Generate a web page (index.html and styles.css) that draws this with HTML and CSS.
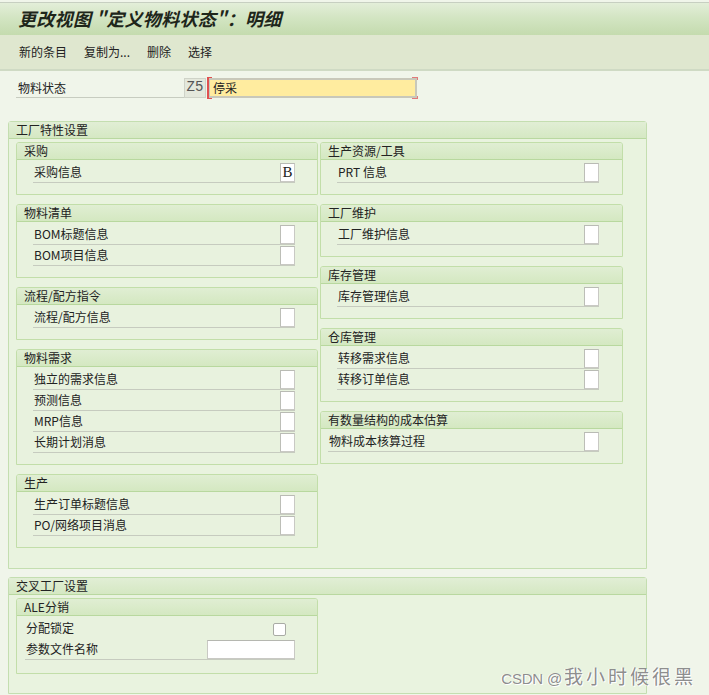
FILE: index.html
```html
<!DOCTYPE html>
<html lang="zh-CN">
<head>
<meta charset="utf-8">
<title>更改视图 "定义物料状态"：明细</title>
<link rel="stylesheet" href="styles.css">
</head>
<body>
<div class="titlebar"><h1>更改视图 "定义物料状态"：明细</h1></div>
<div class="toolbar">
  <span>新的条目</span><span>复制为...</span><span>删除</span><span>选择</span>
</div>
<main class="content">
  <div class="keyrow">
    <span class="keylabel">物料状态</span>
    <span class="code">Z5</span>
    <span class="yellow">停采<i class="mk mk-l"></i><i class="mk mk-rt"></i><i class="mk mk-rb"></i></span>
  </div>

  <section class="group g1">
    <div class="ghead">工厂特性设置</div>
    <div class="gbody cols">
      <div class="col">
        <div class="box">
          <div class="bhead">采购</div>
          <div class="bbody">
            <div class="row"><span class="lbl">采购信息</span><span class="chk val">B</span></div>
          </div>
        </div>
        <div class="box">
          <div class="bhead">物料清单</div>
          <div class="bbody">
            <div class="row"><span class="lbl">BOM标题信息</span><span class="chk"></span></div>
            <div class="row"><span class="lbl">BOM项目信息</span><span class="chk"></span></div>
          </div>
        </div>
        <div class="box">
          <div class="bhead">流程/配方指令</div>
          <div class="bbody">
            <div class="row"><span class="lbl">流程/配方信息</span><span class="chk"></span></div>
          </div>
        </div>
        <div class="box">
          <div class="bhead">物料需求</div>
          <div class="bbody">
            <div class="row"><span class="lbl">独立的需求信息</span><span class="chk"></span></div>
            <div class="row"><span class="lbl">预测信息</span><span class="chk"></span></div>
            <div class="row"><span class="lbl">MRP信息</span><span class="chk"></span></div>
            <div class="row"><span class="lbl">长期计划消息</span><span class="chk"></span></div>
          </div>
        </div>
        <div class="box">
          <div class="bhead">生产</div>
          <div class="bbody">
            <div class="row"><span class="lbl">生产订单标题信息</span><span class="chk"></span></div>
            <div class="row"><span class="lbl">PO/网络项目消息</span><span class="chk"></span></div>
          </div>
        </div>
      </div>
      <div class="col right">
        <div class="box">
          <div class="bhead">生产资源/工具</div>
          <div class="bbody">
            <div class="row"><span class="lbl">PRT 信息</span><span class="chk"></span></div>
          </div>
        </div>
        <div class="box">
          <div class="bhead">工厂维护</div>
          <div class="bbody">
            <div class="row"><span class="lbl">工厂维护信息</span><span class="chk"></span></div>
          </div>
        </div>
        <div class="box">
          <div class="bhead">库存管理</div>
          <div class="bbody">
            <div class="row"><span class="lbl">库存管理信息</span><span class="chk"></span></div>
          </div>
        </div>
        <div class="box">
          <div class="bhead">仓库管理</div>
          <div class="bbody">
            <div class="row"><span class="lbl">转移需求信息</span><span class="chk"></span></div>
            <div class="row"><span class="lbl">转移订单信息</span><span class="chk"></span></div>
          </div>
        </div>
        <div class="box">
          <div class="bhead">有数量结构的成本估算</div>
          <div class="bbody">
            <div class="row wide"><span class="lbl">物料成本核算过程</span><span class="chk"></span></div>
          </div>
        </div>
      </div>
    </div>
  </section>

  <section class="group g2">
    <div class="ghead">交叉工厂设置</div>
    <div class="gbody">
      <div class="box ale">
        <div class="bhead">ALE分销</div>
        <div class="bbody">
          <div class="row plain"><span class="lbl">分配锁定</span><span class="cb"></span></div>
          <div class="row"><span class="lbl">参数文件名称</span><span class="inp"></span></div>
        </div>
      </div>
    </div>
  </section>
</main>
<div class="watermark"><span class="wm-lat">CSDN @</span><span class="wm-cjk">我小时候很黑</span></div>
</body>
</html>
```

FILE: styles.css
```css
* { box-sizing: border-box; }

html, body {
  margin: 0;
  padding: 0;
}

body {
  background: #f0f5ea;
  font-family: "Noto Sans CJK SC", "Noto Sans", sans-serif;
  font-size: 12px;
  color: #222;
  width: 709px;
  height: 695px;
  overflow: hidden;
  position: relative;
}

.titlebar {
  margin-top: 2px;
  height: 33px;
  border-top: 1px solid #c7cfc1;
  background: linear-gradient(#e3eed9 0%, #d3e5c3 45%, #c4dbae 100%);
  padding-left: 18px;
}

.titlebar h1 {
  margin: 0;
  font-size: 18px;
  font-weight: bold;
  font-style: italic;
  line-height: 31px;
  color: #1e261b;
  letter-spacing: 0.3px;
}

.toolbar {
  height: 36px;
  background: #dfe7cf;
  border-bottom: 2px solid #cfdac4;
  display: flex;
  align-items: center;
  gap: 17px;
  padding-left: 19px;
  padding-bottom: 1px;
  color: #222;
}

.content {
  padding-top: 7px;
}

.keyrow {
  display: flex;
  align-items: stretch;
  height: 20px;
  margin-left: 16px;
}

.keylabel {
  width: 168px;
  padding-left: 2px;
  line-height: 19px;
  border-bottom: 1px solid #c7ccc0;
  color: #222;
}

.code {
  width: 22px;
  background: #e4e8dc;
  border: 1px solid #cfd3c8;
  font-family: "Liberation Mono", monospace;
  font-size: 14px;
  line-height: 17px;
  color: #555;
  text-align: center;
}

.yellow {
  position: relative;
  margin-left: 3px;
  width: 208px;
  background: #ffec9f;
  border: 2px solid #c8c8ba;
  border-left-width: 1px;
  padding-left: 3px;
  line-height: 16px;
  color: #222;
}

.mk {
  position: absolute;
  border: 0 solid #e05050;
}

.mk-l {
  left: -3px;
  top: -3px;
  bottom: -3px;
  width: 5px;
  border-width: 1px 0 1px 2px;
}

.mk-rt {
  right: -3px;
  top: -3px;
  width: 6px;
  height: 3px;
  border-width: 1px 1px 0 0;
  border-color: #e27a7a;
}

.mk-rb {
  right: -3px;
  bottom: -3px;
  width: 6px;
  height: 3px;
  border-width: 0 1px 1px 0;
  border-color: #e27a7a;
}

.group {
  margin-left: 8px;
  width: 639px;
  border: 1px solid #c4deb0;
  border-radius: 3px 3px 0 0;
  background: #e9f3df;
}

.g1 {
  margin-top: 23px;
}

.g2 {
  margin-top: 8px;
  height: 117px;
}

.ghead {
  height: 17px;
  line-height: 16px;
  padding-left: 7px;
  background: linear-gradient(#e1eed5, #d5e8c3);
  border-bottom: 1px solid #b9d8a0;
  color: #222;
}

.gbody {
  padding: 3px 0 20px 7px;
}

.cols {
  display: flex;
  gap: 2px;
}

.col {
  width: 302px;
  display: flex;
  flex-direction: column;
  gap: 9px;
}

.col.right {
  width: 303px;
}

.box {
  border: 1px solid #c2dea9;
  border-radius: 3px 3px 0 0;
  background: #e8f2de;
}

.box.ale {
  width: 302px;
}

.bhead {
  height: 17px;
  line-height: 16px;
  padding-left: 7px;
  background: linear-gradient(#e0eed3, #d4e8c1);
  border-bottom: 1px solid #b8d89e;
  border-radius: 2px 2px 0 0;
  color: #222;
}

.bbody {
  padding: 3px 0 10px 16px;
}

.row {
  position: relative;
  display: flex;
  justify-content: space-between;
  width: 262px;
  height: 20px;
  margin-bottom: 1px;
  border-bottom: 1px solid #c6cbbf;
}

.row.wide {
  margin-left: -9px;
  width: 271px;
}

.row.plain {
  border-bottom: none;
}

.lbl {
  line-height: 18px;
  padding-left: 1px;
  color: #222;
}

.chk {
  width: 15px;
  height: 19px;
  background: #ffffff;
  border: 1px solid #c9c9c4;
  border-top-color: #b9bbb4;
  border-left-color: #bcbeb7;
  font-family: "Liberation Serif", serif;
  font-size: 15px;
  line-height: 17px;
  text-align: center;
  color: #222;
}

.ale .bbody {
  padding: 3px 0 12px 8px;
}

.ale .row {
  width: 270px;
}

.cb {
  align-self: center;
  margin-right: 9px;
  width: 13px;
  height: 13px;
  background: #ffffff;
  border: 1px solid #a9aba5;
  border-radius: 2px;
}

.inp {
  width: 88px;
  height: 19px;
  background: #ffffff;
  border: 1px solid #c9c9c4;
  border-top-color: #b5b7b0;
}

.watermark {
  position: absolute;
  right: 16px;
  bottom: 6px;
  color: #8e8e8e;
  text-shadow: 1px 1px 0 #ffffff, -1px 0 0 #ffffff;
  white-space: nowrap;
  display: flex;
  align-items: baseline;
}

.wm-lat {
  font-family: "Liberation Sans", sans-serif;
  font-size: 15px;
  letter-spacing: -0.2px;
  margin-right: 2px;
}

.wm-cjk {
  font-family: "Noto Sans CJK SC", sans-serif;
  font-size: 19px;
  letter-spacing: 3px;
  margin-right: -3px;
}
```
